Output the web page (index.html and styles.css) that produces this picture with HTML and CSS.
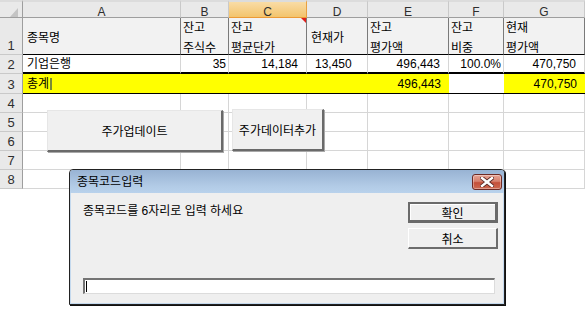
FILE: index.html
```html
<!DOCTYPE html>
<html lang="ko">
<head>
<meta charset="utf-8">
<title>종목코드입력</title>
<link rel="stylesheet" href="styles.css">
</head>
<body>
<div class="wrap">
  <div class="sheet">
    <!-- column headers -->
    <div class="c hd corner"><span class="tri"></span></div>
    <div class="c hd">A</div>
    <div class="c hd">B</div>
    <div class="c hd sel">C</div>
    <div class="c hd">D</div>
    <div class="c hd">E</div>
    <div class="c hd">F</div>
    <div class="c hd">G</div>

    <!-- row 1 -->
    <div class="c rh">1</div>
    <div class="c r1 mid pl3">종목명</div>
    <div class="c r1 two">잔고<br>주식수</div>
    <div class="c r1 two cm">잔고<br>평균단가<span class="note"></span></div>
    <div class="c r1 mid pl3">현재가</div>
    <div class="c r1 two">잔고<br>평가액</div>
    <div class="c r1 two">잔고<br>비중</div>
    <div class="c r1 two">현재<br>평가액</div>

    <!-- row 2 -->
    <div class="c rh">2</div>
    <div class="c r2 pl3">기업은행</div>
    <div class="c r2 num">35</div>
    <div class="c r2 num acc">14,184</div>
    <div class="c r2 pl8">13,450</div>
    <div class="c r2 num acc">496,443</div>
    <div class="c r2 num">100.0%</div>
    <div class="c r2 num acc">470,750</div>

    <!-- row 3 -->
    <div class="c rh">3</div>
    <div class="c r3 yel span4 pl3">총계<span class="cur"></span></div>
    <div class="c r3 yel num acc">496,443</div>
    <div class="c r3 blank"></div>
    <div class="c r3 yel num acc">470,750</div>

    <!-- rows 4-8 -->
    <div class="c rh">4</div>
    <div class="c"></div><div class="c"></div><div class="c"></div><div class="c"></div><div class="c"></div><div class="c"></div><div class="c"></div>
    <div class="c rh">5</div>
    <div class="c"></div><div class="c"></div><div class="c"></div><div class="c"></div><div class="c"></div><div class="c"></div><div class="c"></div>
    <div class="c rh">6</div>
    <div class="c"></div><div class="c"></div><div class="c"></div><div class="c"></div><div class="c"></div><div class="c"></div><div class="c"></div>
    <div class="c rh">7</div>
    <div class="c"></div><div class="c"></div><div class="c"></div><div class="c"></div><div class="c"></div><div class="c"></div><div class="c"></div>
    <div class="c rh">8</div>
    <div class="c"></div><div class="c"></div><div class="c"></div><div class="c"></div><div class="c"></div><div class="c"></div><div class="c"></div>
  </div>

  <button class="sbtn sbtn-update">주가업데이트</button>
  <button class="sbtn sbtn-add">주가데이터추가</button>

  <div class="dlg">
    <div class="dlg-title">
      <span class="dlg-caption">종목코드입력</span>
      <span class="xbtn">
        <svg width="14" height="10" viewBox="0 0 14 10">
          <path d="M2 1 L12 9 M12 1 L2 9" stroke="#5a2a26" stroke-width="4.2" stroke-linecap="square" fill="none"/>
          <path d="M2 1 L12 9 M12 1 L2 9" stroke="#ffffff" stroke-width="2.4" stroke-linecap="square" fill="none"/>
        </svg>
      </span>
    </div>
    <div class="dlg-body">
      <div class="dlg-top">
        <p class="msg">종목코드를 6자리로 입력 하세요</p>
        <div class="btns">
          <span class="b def">확인</span>
          <span class="b">취소</span>
        </div>
      </div>
      <div class="inp"><span class="caret"></span></div>
    </div>
  </div>
</div>
</body>
</html>
```

FILE: styles.css
```css
* { box-sizing: border-box; }

body {
  margin: 0;
  background: #ffffff;
  font-family: "Liberation Sans", "Noto Sans CJK KR", sans-serif;
  font-size: 12px;
  color: #000;
}

.wrap {
  position: relative;
  width: 587px;
  height: 321px;
  overflow: hidden;
}

.sheet {
  display: grid;
  grid-template-columns: 23px 158px 48px 78px 61px 81px 55px 81px;
  grid-template-rows: 18px 37px 19px 20px 19px 19px 19px 19px 19px;
}

.c {
  display: flex;
  align-items: flex-end;
  padding: 0 2px;
  line-height: 16px;
  white-space: nowrap;
  overflow: hidden;
  border-right: 1px solid #d6d6d6;
  border-bottom: 1px solid #d6d6d6;
}

/* headers */
.hd {
  justify-content: center;
  align-items: flex-start;
  padding-top: 2px;
  background: #e9e9e9;
  color: #2e2e2e;
  border-right: 1px solid #c9c9c9;
  border-bottom: 1px solid #9e9e9e;
  border-top: 2px solid #dcdcdc;
}
.hd.sel {
  background: linear-gradient(#f9dca6, #f3c46c);
  border-right: 1px solid #e8a040;
  border-bottom: 1px solid #ec9a36;
}
.corner {
  position: relative;
  border-right: 1px solid #9e9e9e;
}
.tri {
  position: absolute;
  right: 4px;
  bottom: 0;
  width: 0;
  height: 0;
  border-bottom: 9px solid #c4c4c4;
  border-left: 8px solid transparent;
}

.rh {
  justify-content: center;
  background: #e9e9e9;
  color: #2e2e2e;
  border-right: 1px solid #9e9e9e;
  border-bottom: 1px solid #c9c9c9;
  font-size: 13px;
}

/* row 1 */
.r1 {
  background: #f2f2f2;
  border-right: 1px solid #7a7a7a;
  border-bottom: 1px solid #000;
}
.r1.mid { align-items: center; padding-top: 3px; }
.r1.two {
  display: block;
  line-height: 20px;
  padding-top: 0;
  overflow: visible;
}
.cm { position: relative; }
.note {
  position: absolute;
  top: 0;
  right: 0;
  width: 0;
  height: 0;
  border-top: 5px solid #e0201c;
  border-left: 5px solid transparent;
}

/* row 2 */
.r2 {
  border-bottom: 2px solid #000;
}

/* row 3 */
.r3 {
  border-bottom: 1px solid #000;
  border-right: none;
  padding-bottom: 1px;
}
.yel { background: #ffff00; }
.span4 { grid-column: span 4; }
.blank { background: #fff; }
.cur {
  display: inline-block;
  width: 2px;
  height: 12px;
  margin: 0 0 2px 1px;
  background: #7b8a35;
}

.num { justify-content: flex-end; }
.acc { padding-right: 8px; }
.pl3 { padding-left: 4px; }
.pl8 { padding-left: 8px; }

/* sheet buttons (floating over the grid) */
.sbtn {
  position: absolute;
  margin: 0;
  padding: 0;
  font: inherit;
  font-size: 12px;
  color: #000;
  background: #f0f0f0;
  border-top: 1px solid #e6e6e6;
  border-left: 1px solid #e6e6e6;
  border-right: 2px solid #6a6a6a;
  border-bottom: 2px solid #6a6a6a;
  box-shadow: 1px 1px 0 #a8a8a8;
}
.sbtn-update { left: 47px; top: 110px; width: 176px; height: 42px; }
.sbtn-add { left: 232px; top: 109px; width: 92px; height: 42px; }

/* dialog */
.dlg {
  position: absolute;
  left: 69px;
  top: 169px;
  width: 436px;
  height: 136px;
  display: flex;
  flex-direction: column;
  border: 1px solid #222;
  border-radius: 4px 4px 0 0;
  box-shadow: 1px 1px 0 #111;
  background: #f0f0f0;
}
.dlg-title {
  height: 23px;
  flex: none;
  display: flex;
  align-items: center;
  justify-content: space-between;
  padding: 0 2px 0 7px;
  background: linear-gradient(#98b3d3, #b2cbe6 70%, #b9d2ec);
  border-radius: 3px 3px 0 0;
}
.dlg-caption {
  line-height: 16px;
}
.xbtn {
  width: 30px;
  height: 16px;
  margin-top: 1px;
  display: flex;
  align-items: center;
  justify-content: center;
  border: 1px solid #6e2a24;
  border-radius: 3px;
  background: linear-gradient(#e6a394, #d7806d 45%, #c4503a 55%, #cd6a52);
  box-shadow: inset 0 0 0 1px rgba(255,255,255,0.35);
}
.dlg-body {
  flex: 1;
  display: flex;
  flex-direction: column;
  padding: 9px 5px 9px 12px;
  border: 1px solid #c4d9ee;
  border-top: none;
  background: #efefef;
}
.dlg-top {
  display: flex;
  justify-content: space-between;
  align-items: flex-start;
}
.msg {
  margin: 1px 0 0;
  line-height: 16px;
}
.btns {
  display: flex;
  flex-direction: column;
  gap: 5px;
}
.b {
  display: flex;
  align-items: center;
  justify-content: center;
  width: 90px;
  height: 21px;
  background: #efefef;
  border-top: 1px solid #ffffff;
  border-left: 1px solid #ffffff;
  border-right: 2px solid #6c6c6c;
  border-bottom: 2px solid #6c6c6c;
}
.b.def {
  border: 2px solid #6a6a6a;
  border-right-width: 3px;
  border-bottom-width: 3px;
  box-shadow: inset 1px 1px 0 #fff;
}
.inp {
  margin-top: 29px;
  margin-right: 3px;
  height: 16px;
  background: #fff;
  border-top: 2px solid #747474;
  border-left: 2px solid #747474;
  border-right: 1px solid #dcdcdc;
  border-bottom: 1px solid #dcdcdc;
  padding: 1px 0 0 1px;
}
.caret {
  display: block;
  width: 1px;
  height: 11px;
  background: #000;
}
```
